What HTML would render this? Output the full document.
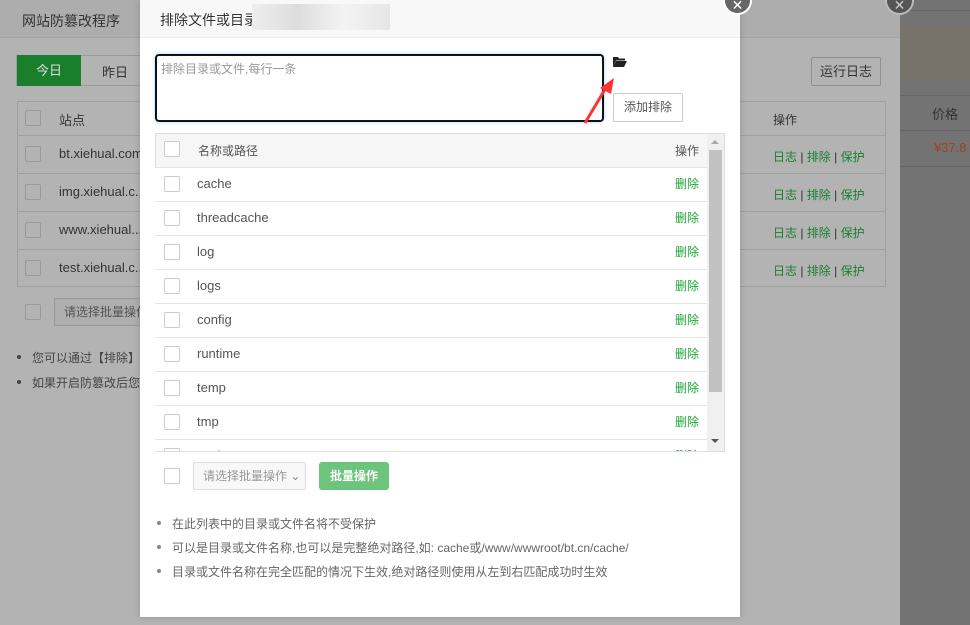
<!DOCTYPE html>
<html><head><meta charset="utf-8"><style>
*{box-sizing:border-box;margin:0;padding:0}
body{width:970px;height:625px;overflow:hidden;position:relative;background:#737373;font-family:"Liberation Sans","Noto Sans CJK SC",sans-serif;font-size:12px;color:#555}
.a{position:absolute}
.cb{position:absolute;width:16px;height:16px;border:1px solid #ccc;border-radius:2px;background:#fff}
.mid{left:0;top:0;width:900px;height:625px;background:#b3b3b3}
.mid .cb{background:#b3b3b3;border-color:#999}
.row{position:absolute;left:155px;width:552px;height:34px;border-top:1px solid #e4e4e4;background:#fff}
.row span{position:absolute;left:42px;top:0;line-height:32px;font-size:13px;color:#555}
.row b{position:absolute;right:8px;top:0;line-height:32px;font-weight:normal;color:#20a53a;font-size:12px}
.row .cb{left:9px;top:8px}
.li{position:absolute;left:157px;font-size:12px;color:#666}
.li:before{content:"";position:absolute;left:0;top:6px;width:4px;height:4px;border-radius:50%;background:#888}
.li span{margin-left:15px}
.ml{position:absolute;left:17px;font-size:12px;color:#444}
.ml:before{content:"";position:absolute;left:0;top:6px;width:4px;height:4px;border-radius:50%;background:#444}
.ml span{margin-left:15px}
</style></head><body>
<div class="a" style="left:900px;top:10px;width:70px;height:1px;background:#666"></div>
<div class="a" style="left:900px;top:27px;width:70px;height:53px;background:#77736a"></div>
<div class="a" style="left:900px;top:95px;width:70px;height:1px;background:#666"></div>
<div class="a" style="left:932px;top:104px;font-size:13px;color:#333">价格</div>
<div class="a" style="left:900px;top:130px;width:70px;height:1px;background:#666"></div>
<div class="a" style="left:934px;top:140px;font-size:13px;color:#a0421a">¥37.8</div>
<div class="a" style="left:900px;top:166px;width:70px;height:1px;background:#666"></div>

<div class="a mid">
  <div class="a" style="left:0;top:0;width:900px;height:38px;background:#adadad;border-bottom:1px solid #a3a3a3"></div>
  <div class="a" style="left:22px;top:11px;font-size:14px;color:#333">网站防篡改程序</div>
  <div class="a" style="left:16px;top:55px;width:130px;height:31px;border:1px solid #9a9a9a"></div>
  <div class="a" style="left:17px;top:55px;width:64px;height:31px;background:#1a7f2d;color:#ddd;font-size:13px;text-align:center;line-height:31px">今日</div>
  <div class="a" style="left:102px;top:62px;font-size:13px;color:#333">昨日</div>
  <div class="a" style="left:811px;top:57px;width:70px;height:29px;border:1px solid #8f8f8f;border-radius:2px;font-size:13px;color:#333;text-align:center;line-height:27px">运行日志</div>
  <div class="a" style="left:17px;top:101px;width:869px;height:186px;border:1px solid #9f9f9f"></div>
  <div class="a" style="left:17px;top:135px;width:869px;height:1px;background:#9f9f9f"></div>
  <div class="a" style="left:17px;top:173px;width:869px;height:1px;background:#9f9f9f"></div>
  <div class="a" style="left:17px;top:211px;width:869px;height:1px;background:#9f9f9f"></div>
  <div class="a" style="left:17px;top:249px;width:869px;height:1px;background:#9f9f9f"></div>
  <div class="cb" style="left:25px;top:110px"></div>
  <div class="cb" style="left:25px;top:146px"></div>
  <div class="cb" style="left:25px;top:184px"></div>
  <div class="cb" style="left:25px;top:222px"></div>
  <div class="cb" style="left:25px;top:260px"></div>
  <div class="a" style="left:59px;top:110px;font-size:13px;color:#333">站点</div>
  <div class="a" style="left:59px;top:146px;font-size:13px;color:#333">bt.xiehual.com</div>
  <div class="a" style="left:59px;top:184px;font-size:13px;color:#333">img.xiehual.c...</div>
  <div class="a" style="left:59px;top:222px;font-size:13px;color:#333">www.xiehual...</div>
  <div class="a" style="left:59px;top:260px;font-size:13px;color:#333">test.xiehual.c...</div>
  <div class="a" style="left:773px;top:111px;font-size:12px;color:#333">操作</div>
  <div class="a" style="left:773px;top:148px;font-size:12px;color:#1a7f2d">日志 <span style="color:#333">|</span> 排除 <span style="color:#333">|</span> 保护</div>
  <div class="a" style="left:773px;top:186px;font-size:12px;color:#1a7f2d">日志 <span style="color:#333">|</span> 排除 <span style="color:#333">|</span> 保护</div>
  <div class="a" style="left:773px;top:224px;font-size:12px;color:#1a7f2d">日志 <span style="color:#333">|</span> 排除 <span style="color:#333">|</span> 保护</div>
  <div class="a" style="left:773px;top:262px;font-size:12px;color:#1a7f2d">日志 <span style="color:#333">|</span> 排除 <span style="color:#333">|</span> 保护</div>
  <div class="cb" style="left:25px;top:304px"></div>
  <div class="a" style="left:54px;top:298px;width:100px;height:28px;border:1px solid #999;background:#aeaeae;color:#555;font-size:12px;line-height:26px;padding-left:9px">请选择批量操作</div>
  <div class="ml" style="top:349px"><span>您可以通过【排除】</span></div>
  <div class="ml" style="top:374px"><span>如果开启防篡改后您</span></div>
</div>
<div class="a" style="left:885px;top:-14px;width:29px;height:29px;border-radius:50%;background:#555;border:2px solid #bbb;color:#ccc;text-align:center;line-height:34px;font-size:14px">✕</div>

<div class="a" style="left:140px;top:0;width:600px;height:617px;background:#fff;box-shadow:0 0 6px rgba(0,0,0,.2)"></div>
<div class="a" style="left:140px;top:0;width:600px;height:38px;background:#f8f8f8;border-bottom:1px solid #eee"></div>
<div class="a" style="left:160px;top:10px;font-size:14px;color:#333">排除文件或目录【</div>
<div class="a" style="left:252px;top:4px;width:138px;height:26px;background:linear-gradient(90deg,#eee,#ddd,#f3f3f3,#e6e6e6)"></div>
<div class="a" style="left:723px;top:-14px;width:29px;height:29px;border-radius:50%;background:#666;border:2px solid #fff;color:#fff;text-align:center;line-height:34px;font-size:14px">✕</div>

<div class="a" style="left:155px;top:54px;width:449px;height:68px;border:2px solid #111;border-radius:4px;box-shadow:0 0 3px #9cf"></div>
<div class="a" style="left:161px;top:60px;font-size:12px;color:#999">排除目录或文件,每行一条</div>
<svg class="a" style="left:612px;top:55px" width="16" height="14" viewBox="0 0 16 14"><path d="M1 2h5l1 1.5h6v2H4L1 12z" fill="#222"/><path d="M4 6h11l-3 6H1z" fill="#222"/></svg>
<svg class="a" style="left:580px;top:72px" width="40" height="56" viewBox="0 0 40 56"><path d="M5 51L27 14" stroke="#f33" stroke-width="3"/><path d="M34 6L20 16l11 6z" fill="#f33"/></svg>
<div class="a" style="left:613px;top:93px;width:70px;height:29px;border:1px solid #ccc;border-radius:2px;font-size:12px;color:#555;text-align:center;line-height:27px">添加排除</div>

<div class="a" style="left:155px;top:133px;width:570px;height:319px;border:1px solid #ddd;background:#fff"></div>
<div class="a" style="left:156px;top:134px;width:551px;height:33px;background:#f6f6f6"></div>
<div class="cb" style="left:164px;top:141px"></div>
<div class="a" style="left:198px;top:142px;font-size:12px;color:#555">名称或路径</div>
<div class="a" style="left:675px;top:142px;font-size:12px;color:#555">操作</div>
<div class="a" style="left:155px;top:134px;width:570px;height:317px;overflow:hidden">
<div class="row" style="left:0;top:33px"><div class="cb"></div><span>cache</span><b>删除</b></div>
<div class="row" style="left:0;top:67px"><div class="cb"></div><span>threadcache</span><b>删除</b></div>
<div class="row" style="left:0;top:101px"><div class="cb"></div><span>log</span><b>删除</b></div>
<div class="row" style="left:0;top:135px"><div class="cb"></div><span>logs</span><b>删除</b></div>
<div class="row" style="left:0;top:169px"><div class="cb"></div><span>config</span><b>删除</b></div>
<div class="row" style="left:0;top:203px"><div class="cb"></div><span>runtime</span><b>删除</b></div>
<div class="row" style="left:0;top:237px"><div class="cb"></div><span>temp</span><b>删除</b></div>
<div class="row" style="left:0;top:271px"><div class="cb"></div><span>tmp</span><b>删除</b></div>
<div class="row" style="left:0;top:305px"><div class="cb"></div><span>cache</span><b>删除</b></div>
</div>
<div class="a" style="left:707px;top:134px;width:17px;height:317px;background:#f0f0f0"></div>
<div class="a" style="left:709px;top:150px;width:13px;height:242px;background:#c1c1c1"></div>
<div class="a" style="left:711px;top:140px;width:0;height:0;border:4px solid transparent;border-bottom-color:#aaa;border-top:0"></div>
<div class="a" style="left:711px;top:439px;width:0;height:0;border:4px solid transparent;border-top-color:#555;border-bottom:0"></div>

<div class="cb" style="left:164px;top:468px"></div>
<div class="a" style="left:193px;top:462px;width:113px;height:28px;border:1px solid #ddd;border-radius:2px;background:#f8f8f8;font-size:12px;color:#999;line-height:26px;padding-left:9px">请选择批量操作 <span style="color:#888">⌄</span></div>
<div class="a" style="left:319px;top:462px;width:70px;height:28px;border-radius:3px;background:#6cc47d;color:#fff;font-size:12px;font-weight:bold;text-align:center;line-height:28px">批量操作</div>

<div class="li" style="top:515px"><span>在此列表中的目录或文件名将不受保护</span></div>
<div class="li" style="top:539px"><span>可以是目录或文件名称,也可以是完整绝对路径,如: cache或/www/wwwroot/bt.cn/cache/</span></div>
<div class="li" style="top:563px"><span>目录或文件名称在完全匹配的情况下生效,绝对路径则使用从左到右匹配成功时生效</span></div>
</body></html>
